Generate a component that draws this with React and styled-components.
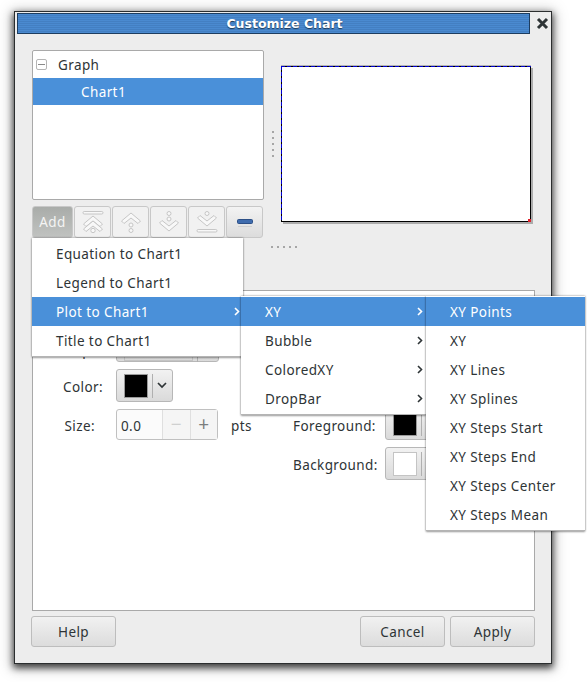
import React from "react";
import styled, { createGlobalStyle } from "styled-components";

const Global = createGlobalStyle`
  html, body { margin: 0; padding: 0; background: #fff; }
  body { width: 587px; height: 682px; overflow: hidden; font-family: "Noto Sans", "Open Sans", sans-serif; font-size: 13.5px; letter-spacing: .4px; color: #2e3436; }
  * { box-sizing: border-box; }
`;

const Page = styled.div`
  padding: 11px 0 0 14px;
  width: 587px;
  height: 682px;
`;
const Window = styled.div`
  position: relative;
  width: 538px;
  height: 653px;
  background: #ededed;
  border: 1px solid #2b2e2f;
  box-shadow: 0 3px 7px 1px rgba(0,0,0,.72), 0 2px 14px 3px rgba(0,0,0,.18);
  padding: 1px 2px 0 2px;
`;
const TitleRow = styled.div`
  display: flex;
  align-items: center;
  height: 21px;
`;
const TitleBar = styled.div`
  width: 513px;
  height: 21px;
  border: 1px solid #1d3d60;
  background: repeating-linear-gradient(#4a8ad0 0 1px, #437fc2 1px 2px);
  color: #fff;
  font: bold 12.5px "DejaVu Sans", sans-serif;
  letter-spacing: 0;
  text-shadow: 0 1px 1px rgba(0,0,0,.6);
  display: flex;
  align-items: center;
  justify-content: center;
  padding-left: 22px;
`;
const CloseBox = styled.svg`
  margin-left: 6px;
  flex: none;
`;
const Top = styled.div`
  display: flex;
  padding: 16px 0 0 15px;
`;
const LeftCol = styled.div`
  width: 232px;
  display: flex;
  flex-direction: column;
`;
const TreePanel = styled.div`
  height: 150px;
  background: #fff;
  border: 1px solid #a9a9a9;
  border-radius: 2px;
`;
const TreeRow = styled.div`
  height: 27px;
  display: flex;
  align-items: center;
  padding-left: ${p => p.$indent}px;
  background: ${p => (p.$selected ? "#4a90d9" : "transparent")};
  color: ${p => (p.$selected ? "#fff" : "#2e3436")};
`;
const Expander = styled.span`
  width: 11px;
  height: 11px;
  margin: 0 11px 0 -22px;
  border: 1px solid #b5b5b5;
  border-radius: 2px;
  display: flex;
  align-items: center;
  justify-content: center;
  &::after { content: ""; width: 7px; height: 1px; background: #8a8a8a; }
`;
const Toolbar = styled.div`
  display: flex;
  gap: 1px;
  margin-top: 6px;
  height: 32px;
`;
const ToolButton = styled.div`
  width: ${p => p.$w || 37}px;
  height: 32px;
  border: 1px solid #c8c8c8;
  border-radius: 3px;
  background: ${p => p.$active
    ? "linear-gradient(#a9aca9, #c0c2c0)"
    : p.$strong ? "linear-gradient(#f3f3f3, #dcdcdc)" : "#f1f1f1"};
  color: #f4f4f4;
  display: flex;
  align-items: center;
  justify-content: center;
`;
const VSplit = styled.div`
  width: 17px;
  display: flex;
  flex-direction: column;
  gap: 4px;
  align-items: center;
  padding-top: 81px;
`;
const Dot = styled.i`
  display: block;
  width: 2px;
  height: 2px;
  background: #a6a6a6;
`;
const Preview = styled.div`
  width: 250px;
  height: 156px;
  margin-top: 16px;
  position: relative;
  background: #fff;
  border: 1px solid #000;
  box-shadow: 2px 2px 0 #acacac, 0 -1px 0 #b5b5b5;
  &::before {
    content: "";
    position: absolute;
    left: -1px;
    top: -1px;
    right: -1px;
    height: 1px;
    background: repeating-linear-gradient(90deg, #0000d0 0 4px, #000 4px 6px);
  }
  &::after {
    content: "";
    position: absolute;
    left: -1px;
    top: -1px;
    bottom: -1px;
    width: 1px;
    background: repeating-linear-gradient(#0000d0 0 4px, #000 4px 6px);
  }
`;
const RedCorner = styled.span`
  position: absolute;
  right: -1px;
  bottom: -1px;
  width: 3px;
  height: 3px;
  background: #e0202a;
`;
const HSplit = styled.div`
  display: flex;
  gap: 4px;
  padding-left: 254px;
  margin-top: 8px;
  height: 2px;
`;
const Frame = styled.div`
  margin: 42px 0 0 15px;
  width: 503px;
  height: 321px;
  background: #fff;
  border: 1px solid #a9a9a9;
  display: grid;
  grid-template-columns: 260px 1fr;
  padding-top: 46px;
`;
const FormCol = styled.div`
  display: flex;
  flex-direction: column;
`;
const Row = styled.div`
  display: flex;
  align-items: center;
  height: ${p => p.$h}px;
  margin-top: ${p => p.$mt || 0}px;
`;
const Label = styled.span`
  width: ${p => p.$w}px;
  padding-top: ${p => p.$pt ?? 2}px;
  text-align: right;
  white-space: nowrap;
  flex: none;
`;
const Combo = styled.div`
  width: ${p => p.$w}px;
  height: ${p => p.$h}px;
  margin-left: ${p => p.$ml}px;
  border: 1px solid #b7b7b7;
  border-radius: 3px;
  background: linear-gradient(#f2f2f2, #dadada);
  display: flex;
  align-items: center;
  padding-left: 7px;
  flex: none;
`;
const ComboValue = styled.span`
  width: 69px;
  height: 100%;
  border-left: 1px solid #c4c4c4;
  border-right: 1px solid #c4c4c4;
  border-bottom: 1px solid #c4c4c4;
  flex: none;
`;
const Swatch = styled.span`
  width: 24px;
  height: 24px;
  background: ${p => p.$c};
  border: 1px solid ${p => (p.$c === "#000" ? "#9a9a9a" : "#c4c4c4")};
  flex: none;
`;
const ComboSep = styled.span`
  width: 1px;
  height: ${p => p.$h || 24}px;
  background: #b0b0b0;
  margin-left: 4px;
`;
const Chevron = styled.svg`
  margin-left: 4px;
  flex: none;
`;
const Spin = styled.div`
  width: 102px;
  height: 31px;
  margin-left: 21px;
  border: 1px solid #c0c0c0;
  border-radius: 3px;
  background: #fbfbfb;
  display: grid;
  grid-template-columns: 45px 28px 1fr;
  flex: none;
`;
const SpinValue = styled.span`
  display: flex;
  align-items: center;
  padding: 2px 0 0 4px;
`;
const SpinBtn = styled.span`
  border-left: 1px solid #dfdfdf;
  display: flex;
  align-items: center;
  justify-content: center;
  color: ${p => (p.$off ? "#cfd0d0" : "#7b7e7e")};
  font-size: 19px;
  line-height: 1;
  background: #f5f5f5;
`;
const Unit = styled.span`
  margin-left: 13px;
  padding-top: 2px;
`;
const ButtonBar = styled.div`
  display: flex;
  justify-content: space-between;
  margin: 5px 0 0 14px;
  width: 504px;
`;
const ButtonGroup = styled.div`
  display: flex;
  gap: 5px;
`;
const PushButton = styled.div`
  width: 85px;
  height: 31px;
  border: 1px solid #bdbdbd;
  border-radius: 3px;
  background: linear-gradient(#f1f1f1, #dcdcdc);
  display: flex;
  align-items: center;
  justify-content: center;
`;
const Menu = styled.div`
  position: absolute;
  left: ${p => p.$x}px;
  top: ${p => p.$y}px;
  width: ${p => p.$w}px;
  background: #fff;
  padding: 1px 0;
  border-bottom: 1px solid #b4b4b4;
  box-shadow: 0 0 2px rgba(0,0,0,.45), 0 1px 2px rgba(0,0,0,.25);
  z-index: ${p => p.$z};
`;
const MenuItem = styled.div`
  height: 29px;
  display: flex;
  align-items: center;
  justify-content: space-between;
  padding: 0 ${p => p.$pr || 0}px 0 24px;
  background: ${p => (p.$on ? "#4a90d9" : "transparent")};
  color: ${p => (p.$on ? "#fff" : "#2e3436")};
`;

const Arrow = ({ on }) => (
  <svg width="6" height="9" viewBox="0 0 6 9">
    <path d="M1 1l3.5 3.5L1 8" fill="none" stroke={on ? "#fff" : "#2e3436"} strokeWidth="1.6" />
  </svg>
);

const Down = () => (
  <Chevron width="10" height="7" viewBox="0 0 10 7">
    <path d="M1 1l4 4 4-4" fill="none" stroke="#2e3436" strokeWidth="1.7" />
  </Chevron>
);

const Stroke = { fill: "#f8f8f8", stroke: "#c6c6c6", strokeWidth: 1 };
const Chev = ({ y, flip }) => (
  <path
    d={flip
      ? `M3.5 ${y}l2.5-2.5 7 5.5 7-5.5 2.5 2.5-9.5 8z`
      : `M3.5 ${y}l2.5 2.5 7-5.5 7 5.5 2.5-2.5-9.5-8z`}
    {...Stroke}
  />
);
const Top1 = () => (
  <svg width="26" height="24" viewBox="0 0 26 24">
    <rect x="3" y="1.5" width="20" height="2.5" rx="1.2" {...Stroke} />
    <Chev y={14} />
    <circle cx="13" cy="20.5" r="2.2" {...Stroke} />
    <Chev y={19} />
  </svg>
);
const Up1 = () => (
  <svg width="26" height="24" viewBox="0 0 26 24">
    <Chev y={11} />
    <circle cx="13" cy="15" r="2" {...Stroke} />
    <circle cx="13" cy="20.5" r="2" {...Stroke} />
  </svg>
);
const Down1 = () => (
  <svg width="26" height="24" viewBox="0 0 26 24">
    <circle cx="13" cy="3.5" r="2" {...Stroke} />
    <circle cx="13" cy="9" r="2" {...Stroke} />
    <Chev y={13} flip />
  </svg>
);
const Bottom1 = () => (
  <svg width="26" height="24" viewBox="0 0 26 24">
    <circle cx="13" cy="3.5" r="2" {...Stroke} />
    <Chev y={8} flip />
    <rect x="3" y="19.5" width="20" height="2.5" rx="1.2" {...Stroke} />
  </svg>
);
const Minus = () => (
  <svg width="18" height="12" viewBox="0 0 18 12">
    <rect x="1.5" y="3.5" width="15" height="4" rx="1" fill="#3f6cae" stroke="#2c4f86" />
    <rect x="2" y="10" width="14" height="1" fill="#d0d0d0" />
  </svg>
);

const dots = [0, 1, 2, 3, 4];

const ColorCombo = ({ c, ml }) => (
  <Combo $w={57} $h={33} $ml={ml}>
    <Swatch $c={c} />
    <ComboSep />
    <Down />
  </Combo>
);

export default function App() {
  return (
    <Page>
      <Global />
      <Window>
        <TitleRow>
          <TitleBar>Customize Chart</TitleBar>
          <CloseBox width="13" height="13" viewBox="0 0 13 13">
            <path d="M2 2l9 9M11 2l-9 9" stroke="#2e3436" strokeWidth="3" />
          </CloseBox>
        </TitleRow>
        <Top>
          <LeftCol>
            <TreePanel>
              <TreeRow $indent={25}><Expander />Graph</TreeRow>
              <TreeRow $indent={48} $selected>Chart1</TreeRow>
            </TreePanel>
            <Toolbar>
              <ToolButton $w={41} $active>Add</ToolButton>
              <ToolButton><Top1 /></ToolButton>
              <ToolButton><Up1 /></ToolButton>
              <ToolButton><Down1 /></ToolButton>
              <ToolButton><Bottom1 /></ToolButton>
              <ToolButton $strong><Minus /></ToolButton>
            </Toolbar>
          </LeftCol>
          <VSplit>{dots.map(d => <Dot key={d} />)}</VSplit>
          <Preview><RedCorner /></Preview>
        </Top>
        <HSplit>{dots.map(d => <Dot key={d} />)}</HSplit>
        <Frame>
          <FormCol>
            <Row $h={25}>
              <Label $w={70} $pt={0}>Shape:</Label>
              <Combo $w={103} $h={25} $ml={13}>
                <ComboValue />
                <ComboSep $h={25} />
              </Combo>
            </Row>
            <Row $h={33} $mt={7}>
              <Label $w={70}>Color:</Label>
              <ColorCombo c="#000" ml={13} />
            </Row>
            <Row $h={31} $mt={7}>
              <Label $w={62}>Size:</Label>
              <Spin>
                <SpinValue>0.0</SpinValue>
                <SpinBtn $off>−</SpinBtn>
                <SpinBtn>+</SpinBtn>
              </Spin>
              <Unit>pts</Unit>
            </Row>
          </FormCol>
          <FormCol>
            <Row $h={33} $mt={70}>
              <Label $w={79} $pt={4}>Foreground:</Label>
              <ColorCombo c="#000" ml={13} />
            </Row>
            <Row $h={33} $mt={7}>
              <Label $w={79}>Background:</Label>
              <ColorCombo c="#fff" ml={13} />
            </Row>
          </FormCol>
        </Frame>
        <ButtonBar>
          <PushButton>Help</PushButton>
          <ButtonGroup>
            <PushButton>Cancel</PushButton>
            <PushButton>Apply</PushButton>
          </ButtonGroup>
        </ButtonBar>
        <Menu $x={17} $y={226} $w={211} $z={1}>
          <MenuItem>Equation to Chart1</MenuItem>
          <MenuItem>Legend to Chart1</MenuItem>
          <MenuItem $pr={3} $on>Plot to Chart1<Arrow on /></MenuItem>
          <MenuItem>Title to Chart1</MenuItem>
        </Menu>
        <Menu $x={226} $y={284} $w={185} $z={2}>
          <MenuItem $pr={3} $on>XY<Arrow on /></MenuItem>
          <MenuItem $pr={3}>Bubble<Arrow /></MenuItem>
          <MenuItem $pr={3}>ColoredXY<Arrow /></MenuItem>
          <MenuItem $pr={3}>DropBar<Arrow /></MenuItem>
        </Menu>
        <Menu $x={411} $y={284} $w={159} $z={3}>
          <MenuItem $on>XY Points</MenuItem>
          <MenuItem>XY</MenuItem>
          <MenuItem>XY Lines</MenuItem>
          <MenuItem>XY Splines</MenuItem>
          <MenuItem>XY Steps Start</MenuItem>
          <MenuItem>XY Steps End</MenuItem>
          <MenuItem>XY Steps Center</MenuItem>
          <MenuItem>XY Steps Mean</MenuItem>
        </Menu>
      </Window>
    </Page>
  );
}
